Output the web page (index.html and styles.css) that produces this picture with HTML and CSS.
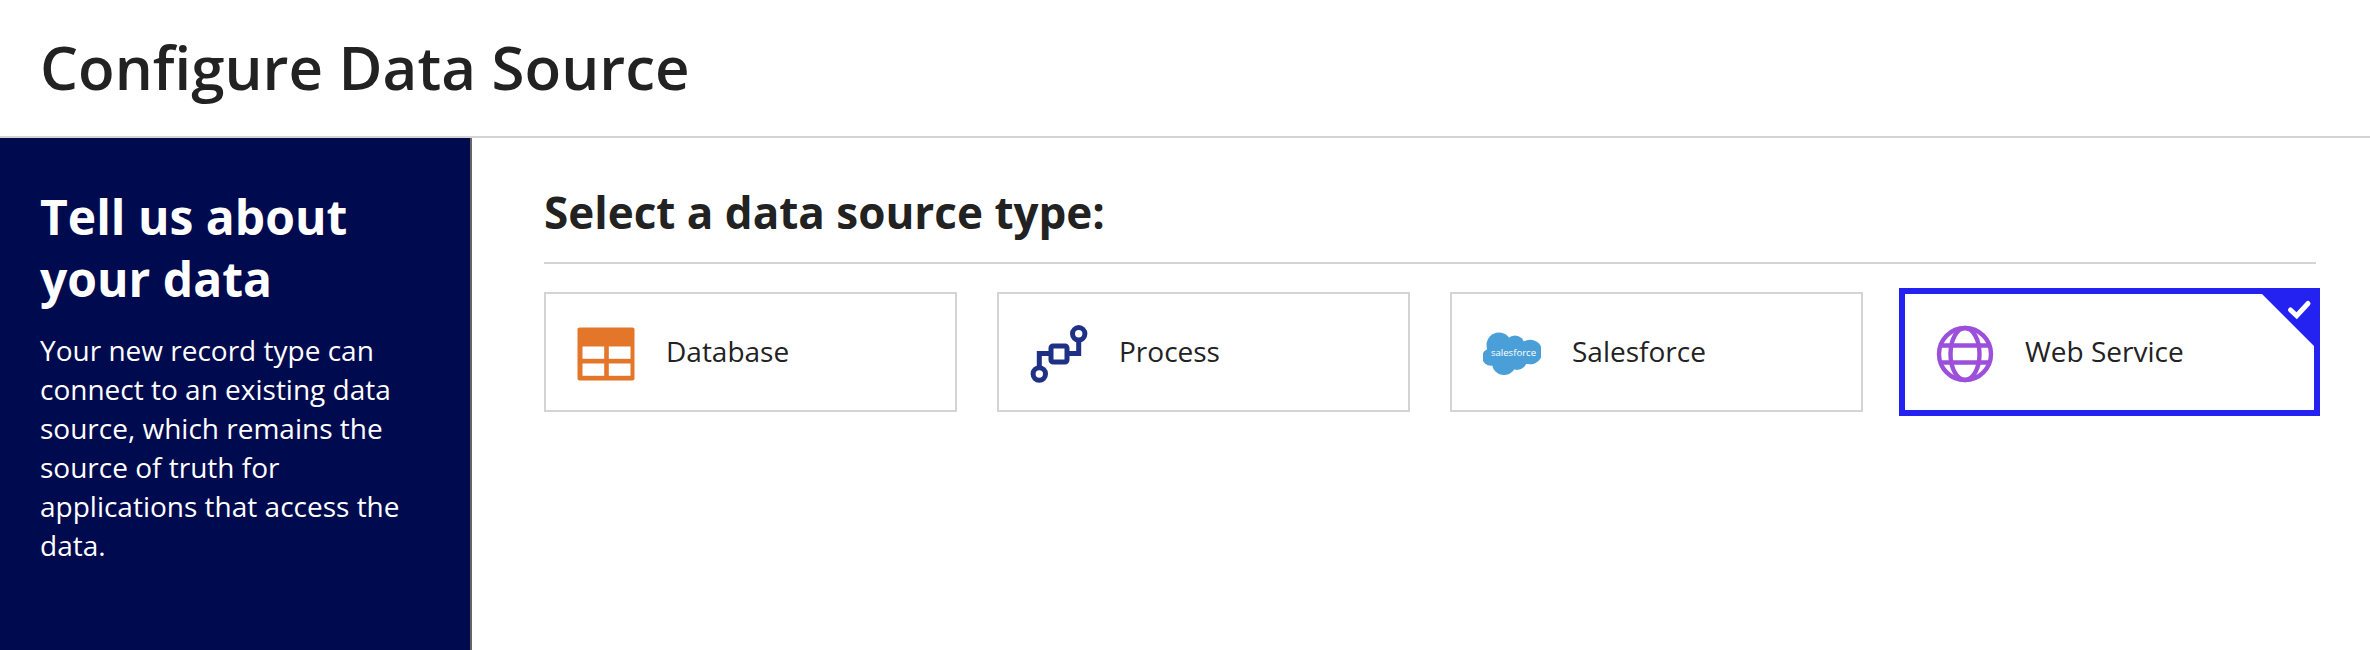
FILE: index.html
```html
<!DOCTYPE html>
<html lang="en">
<head>
    <meta charset="UTF-8">
    <meta name="viewport" content="width=device-width, initial-scale=1.0">
    <title>Configure Data Source</title>
    <link rel="stylesheet" href="styles.css">
</head>
<body>

    <!-- Page title -->
    <header class="page-header">
        <h1>Configure Data Source</h1>
    </header>

    <div class="page-body">
        <!-- Left info panel -->
        <aside class="side-panel">
            <h2>Tell us about your data</h2>
            <p>Your new record type can connect to an existing data source, which remains the source of truth for applications that access the data.</p>
        </aside>

        <!-- Data source choices -->
        <main class="source-main">
            <h3 class="source-title">Select a data source type:</h3>
            <div class="source-grid">
                <div class="source-card">
                    <svg class="source-icon" viewBox="0 0 58 58">
                        <rect x="0.5" y="2.5" width="57" height="53" rx="2" fill="#e4762a"/>
                        <g fill="#fff">
                            <rect x="5.5" y="21.5" width="21.7" height="12.3"/>
                            <rect x="31.8" y="21.5" width="21.7" height="12.3"/>
                            <rect x="5.5" y="38.5" width="21.7" height="12.3"/>
                            <rect x="31.8" y="38.5" width="21.7" height="12.3"/>
                        </g>
                    </svg>
                    <span>Database</span>
                </div>

                <div class="source-card">
                    <svg class="source-icon" viewBox="0 0 58 58">
                        <g fill="none" stroke="#1f3185" stroke-width="5">
                            <circle cx="9.3" cy="49" r="6.2"/>
                            <circle cx="48.7" cy="8.8" r="6.2"/>
                            <rect x="21" y="21" width="16" height="16" rx="2"/>
                            <path d="M9.3 42.5V28.5H21M37 28.5H48.7V15"/>
                        </g>
                    </svg>
                    <span>Process</span>
                </div>

                <div class="source-card">
                    <svg class="source-icon" viewBox="0 0 58 58">
                        <g fill="#4a9fd8">
                            <circle cx="16" cy="20" r="12.5"/>
                            <circle cx="32" cy="20" r="9.5"/>
                            <circle cx="47" cy="27" r="12.3"/>
                            <circle cx="34" cy="35" r="10"/>
                            <circle cx="21" cy="38" r="12"/>
                            <circle cx="8" cy="32" r="8.8"/>
                        </g>
                        <text class="sf-text" x="30.5" y="31">salesforce</text>
                    </svg>
                    <span>Salesforce</span>
                </div>

                <div class="source-card selected">
                    <svg class="source-icon" viewBox="0 0 58 58">
                        <g fill="none" stroke="#9b4fdb" stroke-width="4.4">
                            <circle cx="29" cy="29" r="26"/>
                            <ellipse cx="29" cy="29" rx="14.5" ry="26"/>
                            <path d="M6 20.5H52M6 37.5H52"/>
                        </g>
                    </svg>
                    <span>Web Service</span>
                    <!-- Corner flag on the chosen card -->
                    <svg class="check-flag" viewBox="0 0 52 52">
                        <polygon points="0,0 52,0 52,52" fill="#2322f0"/>
                        <path d="M28.5 16L34.7 21.8L46 9.5" fill="none" stroke="#fff" stroke-width="5" stroke-linecap="round"/>
                    </svg>
                </div>
            </div>
        </main>
    </div>

</body>
</html>
```

FILE: styles.css
```css
body {
    font-family: 'Open Sans', sans-serif;
    margin: 0;
    background-color: #fff;
    color: #222;
    height: 650px;
    display: flex;
    flex-direction: column;
    overflow: hidden;
}

.page-header {
    height: 134px;
    padding: 0 40px 2px;
    display: flex;
    align-items: center;
    border-bottom: 2px solid #d4d4d4;
    flex-shrink: 0;
}

.page-header h1 {
    margin: 0;
    font-size: 60px;
    font-weight: 600;
}

.page-body {
    display: flex;
    flex: 1;
}

/* Left panel */
.side-panel {
    width: 472px;
    box-sizing: border-box;
    background: #000a4e;
    color: #fff;
    border-right: 2px solid #666;
    padding: 48px 40px 0;
}

.side-panel h2 {
    margin: 0 0 21px;
    font-size: 48px;
    line-height: 62px;
    font-weight: 700;
}

.side-panel p {
    margin: 0;
    font-size: 28px;
    line-height: 39px;
}

/* Main part */
.source-main {
    flex: 1;
    padding: 40px 54px 0 72px;
}

.source-title {
    margin: 0 0 28px;
    padding-bottom: 16px;
    font-size: 44px;
    line-height: 68px;
    font-weight: 700;
    border-bottom: 2px solid #d4d4d4;
}

.source-grid {
    display: grid;
    grid-template-columns: repeat(4, 1fr);
    gap: 40px;
}

.source-card {
    position: relative;
    height: 120px;
    box-sizing: border-box;
    border: 2px solid #d4d4d4;
    padding: 0 0 2px 31px;
    display: flex;
    align-items: center;
    gap: 31px;
    font-size: 28px;
}

.source-card.selected {
    border-color: #2322f0;
    box-shadow: 0 0 0 4px #2322f0;
}

.source-icon {
    width: 58px;
    height: 58px;
    flex-shrink: 0;
    margin-top: 6px;
}

.sf-text {
    font-size: 9.6px;
    fill: #fff;
    text-anchor: middle;
}

.check-flag {
    position: absolute;
    top: 0;
    right: 0;
    width: 52px;
    height: 52px;
}
```
